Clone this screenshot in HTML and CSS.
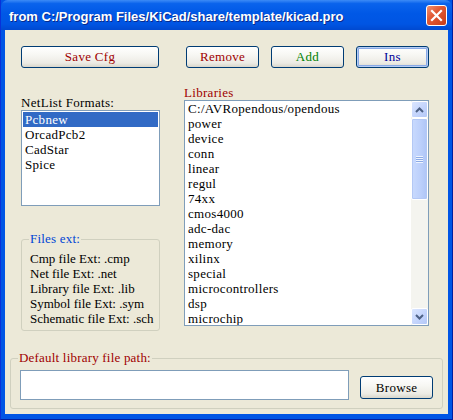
FILE: index.html
```html
<!DOCTYPE html>
<html>
<head>
<meta charset="utf-8">
<link rel="stylesheet" href="styles.css">
</head>
<body>
<div class="window">
  <div class="titlebar">
    <span class="title">from C:/Program Files/KiCad/share/template/kicad.pro</span>
    <span class="close"><svg width="13" height="13" viewBox="0 0 13 13"><path d="M2 2 L11 11 M11 2 L2 11" stroke="#fff" stroke-width="2.2" stroke-linecap="square"/></svg></span>
  </div>
  <div class="client">
    <div class="toolbar">
      <button class="btn btn-save">Save Cfg</button>
      <button class="btn btn-remove">Remove</button>
      <button class="btn btn-add">Add</button>
      <button class="btn btn-ins">Ins</button>
    </div>
    <div class="main">
      <div class="left">
        <div class="label">NetList Formats:</div>
        <div class="listbox formats">
          <div class="item selected">Pcbnew</div>
          <div class="item">OrcadPcb2</div>
          <div class="item">CadStar</div>
          <div class="item">Spice</div>
        </div>
        <fieldset class="group files">
          <legend>Files ext:</legend>
          <div class="line">Cmp file Ext: .cmp</div>
          <div class="line">Net file Ext: .net</div>
          <div class="line">Library file Ext: .lib</div>
          <div class="line">Symbol file Ext: .sym</div>
          <div class="line">Schematic file Ext: .sch</div>
        </fieldset>
      </div>
      <div class="right">
        <div class="label red">Libraries</div>
        <div class="listbox libs">
          <div class="items">
            <div class="item">C:/AVRopendous/opendous</div>
            <div class="item">power</div>
            <div class="item">device</div>
            <div class="item">conn</div>
            <div class="item">linear</div>
            <div class="item">regul</div>
            <div class="item">74xx</div>
            <div class="item">cmos4000</div>
            <div class="item">adc-dac</div>
            <div class="item">memory</div>
            <div class="item">xilinx</div>
            <div class="item">special</div>
            <div class="item">microcontrollers</div>
            <div class="item">dsp</div>
            <div class="item">microchip</div>
          </div>
          <div class="scrollbar">
            <div class="sb-btn"><svg width="9" height="6" viewBox="0 0 9 6"><path d="M1 5 L4.5 1.5 L8 5" fill="none" stroke="#4d6185" stroke-width="2"/></svg></div>
            <div class="sb-thumb"><span class="grip"></span></div>
            <div class="sb-track"></div>
            <div class="sb-btn"><svg width="9" height="6" viewBox="0 0 9 6"><path d="M1 1 L4.5 4.5 L8 1" fill="none" stroke="#4d6185" stroke-width="2"/></svg></div>
          </div>
        </div>
      </div>
    </div>
    <fieldset class="group path">
      <legend>Default library file path:</legend>
      <div class="path-row">
        <div class="textinput"></div>
        <button class="btn btn-browse">Browse</button>
      </div>
    </fieldset>
  </div>
</div>
</body>
</html>
```

FILE: styles.css
```css
* { box-sizing: border-box; }
html, body { margin: 0; padding: 0; background: #ece9d8; }
body { font-family: "Liberation Serif", "Times New Roman", serif; font-size: 13px; color: #000; }

.window {
  width: 453px;
  height: 420px;
  background: #0055e5;
  display: flex;
  flex-direction: column;
  padding: 0 4px 5px 4px;
  border-left: 1px solid #0831d9;
  border-right: 1px solid #001ea0;
  border-bottom: 1px solid #001ea0;
}

.titlebar {
  height: 30px;
  margin: 0 -4px;
  display: flex;
  align-items: center;
  justify-content: space-between;
  padding: 0 5px 0 8px;
  background: linear-gradient(#3d8bf6 0%, #0a63ec 12%, #0058e6 45%, #0055e3 80%, #0049d0 100%);
  border-radius: 7px 7px 0 0;
}
.title {
  color: #fff;
  font-family: "Liberation Sans", Arial, sans-serif;
  font-weight: bold;
  font-size: 13px;
  letter-spacing: 0;
  text-shadow: 1px 1px 0 #0a2a8a;
  padding-top: 3px;
}
.close {
  width: 21px;
  height: 21px;
  border: 1px solid #fff;
  border-radius: 3px;
  background: linear-gradient(135deg, #f09070 0%, #e25a35 40%, #c83c18 100%);
  display: flex;
  align-items: center;
  justify-content: center;
  margin-top: 1px;
}

.client {
  flex: 1;
  background: #ece9d8;
  display: flex;
  flex-direction: column;
}

.toolbar {
  display: flex;
  margin: 16px 0 0 16px;
  height: 22px;
}
.btn {
  font-family: "Liberation Serif", "Times New Roman", serif;
  font-size: 13px;
  height: 22px;
  width: 73px;
  border: 1px solid #003c74;
  border-radius: 3px;
  background: linear-gradient(#ffffff 0%, #f7f7f3 40%, #ecebe4 80%, #d9d6cb 100%);
  padding: 0;
  letter-spacing: 0.3px;
}
.btn-save { width: 138px; color: #a00000; }
.btn-remove { margin-left: 27px; color: #a00000; }
.btn-add { margin-left: 12px; color: #008000; }
.btn-ins { margin-left: 12px; color: #00009a; box-shadow: inset 0 0 0 1px #b6cdf4, inset 0 0 0 2px #89a9e6; }

.main {
  display: flex;
  align-items: flex-start;
  margin: 18px 0 0 16px;
}
.left { width: 139px; margin-top: 10px; display: flex; flex-direction: column; }
.right { margin-left: 24px; display: flex; flex-direction: column; }

.label { line-height: 14px; height: 14px; letter-spacing: 0.3px; }
.red { color: #a00000; }

.listbox {
  background: #fff;
  border: 1px solid #7f9db9;
}
.formats { height: 96px; padding: 0 1px; }
.item { line-height: 15px; height: 15px; padding-left: 2px; white-space: nowrap; letter-spacing: 0.3px; }
.formats .item:first-child { margin-top: 1px; }
.selected { background: #316ac5; color: #fff; }

.libs { width: 245px; height: 226px; display: flex; overflow: hidden; }
.libs .items { flex: 1; padding-left: 1px; overflow: hidden; }
.libs .item { padding-left: 2px; }

.scrollbar {
  width: 17px;
  display: flex;
  flex-direction: column;
  background: #f4f4ef;
  padding: 0;
}
.sb-btn {
  height: 17px;
  border: 1px solid #fff;
  border-radius: 2px;
  background: linear-gradient(135deg, #dbe6fe 0%, #c2d3fc 60%, #b4c8f6 100%);
  display: flex;
  align-items: center;
  justify-content: center;
}
.sb-thumb {
  height: 82px;
  border: 1px solid #fff;
  border-radius: 2px;
  background: linear-gradient(90deg, #c9dafe 0%, #bbcffb 60%, #aec5f6 100%);
  display: flex;
  align-items: center;
  justify-content: center;
  box-shadow: inset 0 0 0 1px #b3c8f5;
}
.grip {
  width: 7px;
  height: 7px;
  background: repeating-linear-gradient(#eef4fe 0 1px, #8caae6 1px 2px);
}
.sb-track { flex: 1; }

.group {
  margin: 0;
  border: 1px solid #d0d0bf;
  border-radius: 3px;
  min-inline-size: 0;
}
.group legend {
  line-height: 14px;
  padding: 0 1px;
  letter-spacing: 0.2px;
}
.files {
  margin-top: 26px;
  padding: 5px 4px 4px 8px;
}
.files legend { color: #0046d5; margin-left: -1px; }
.line { line-height: 15px; height: 15px; white-space: nowrap; }

.path {
  margin: 20px 5px 0 5px;
  padding: 5px 9px 8px 9px;
}
.path legend { color: #a00000; margin-left: -2px; }
.path-row { display: flex; align-items: flex-start; }
.textinput {
  width: 330px;
  height: 30px;
  background: #fff;
  border: 1px solid #7f9db9;
}
.btn-browse { margin: 6px 0 0 11px; height: 23px; color: #000; }
```
